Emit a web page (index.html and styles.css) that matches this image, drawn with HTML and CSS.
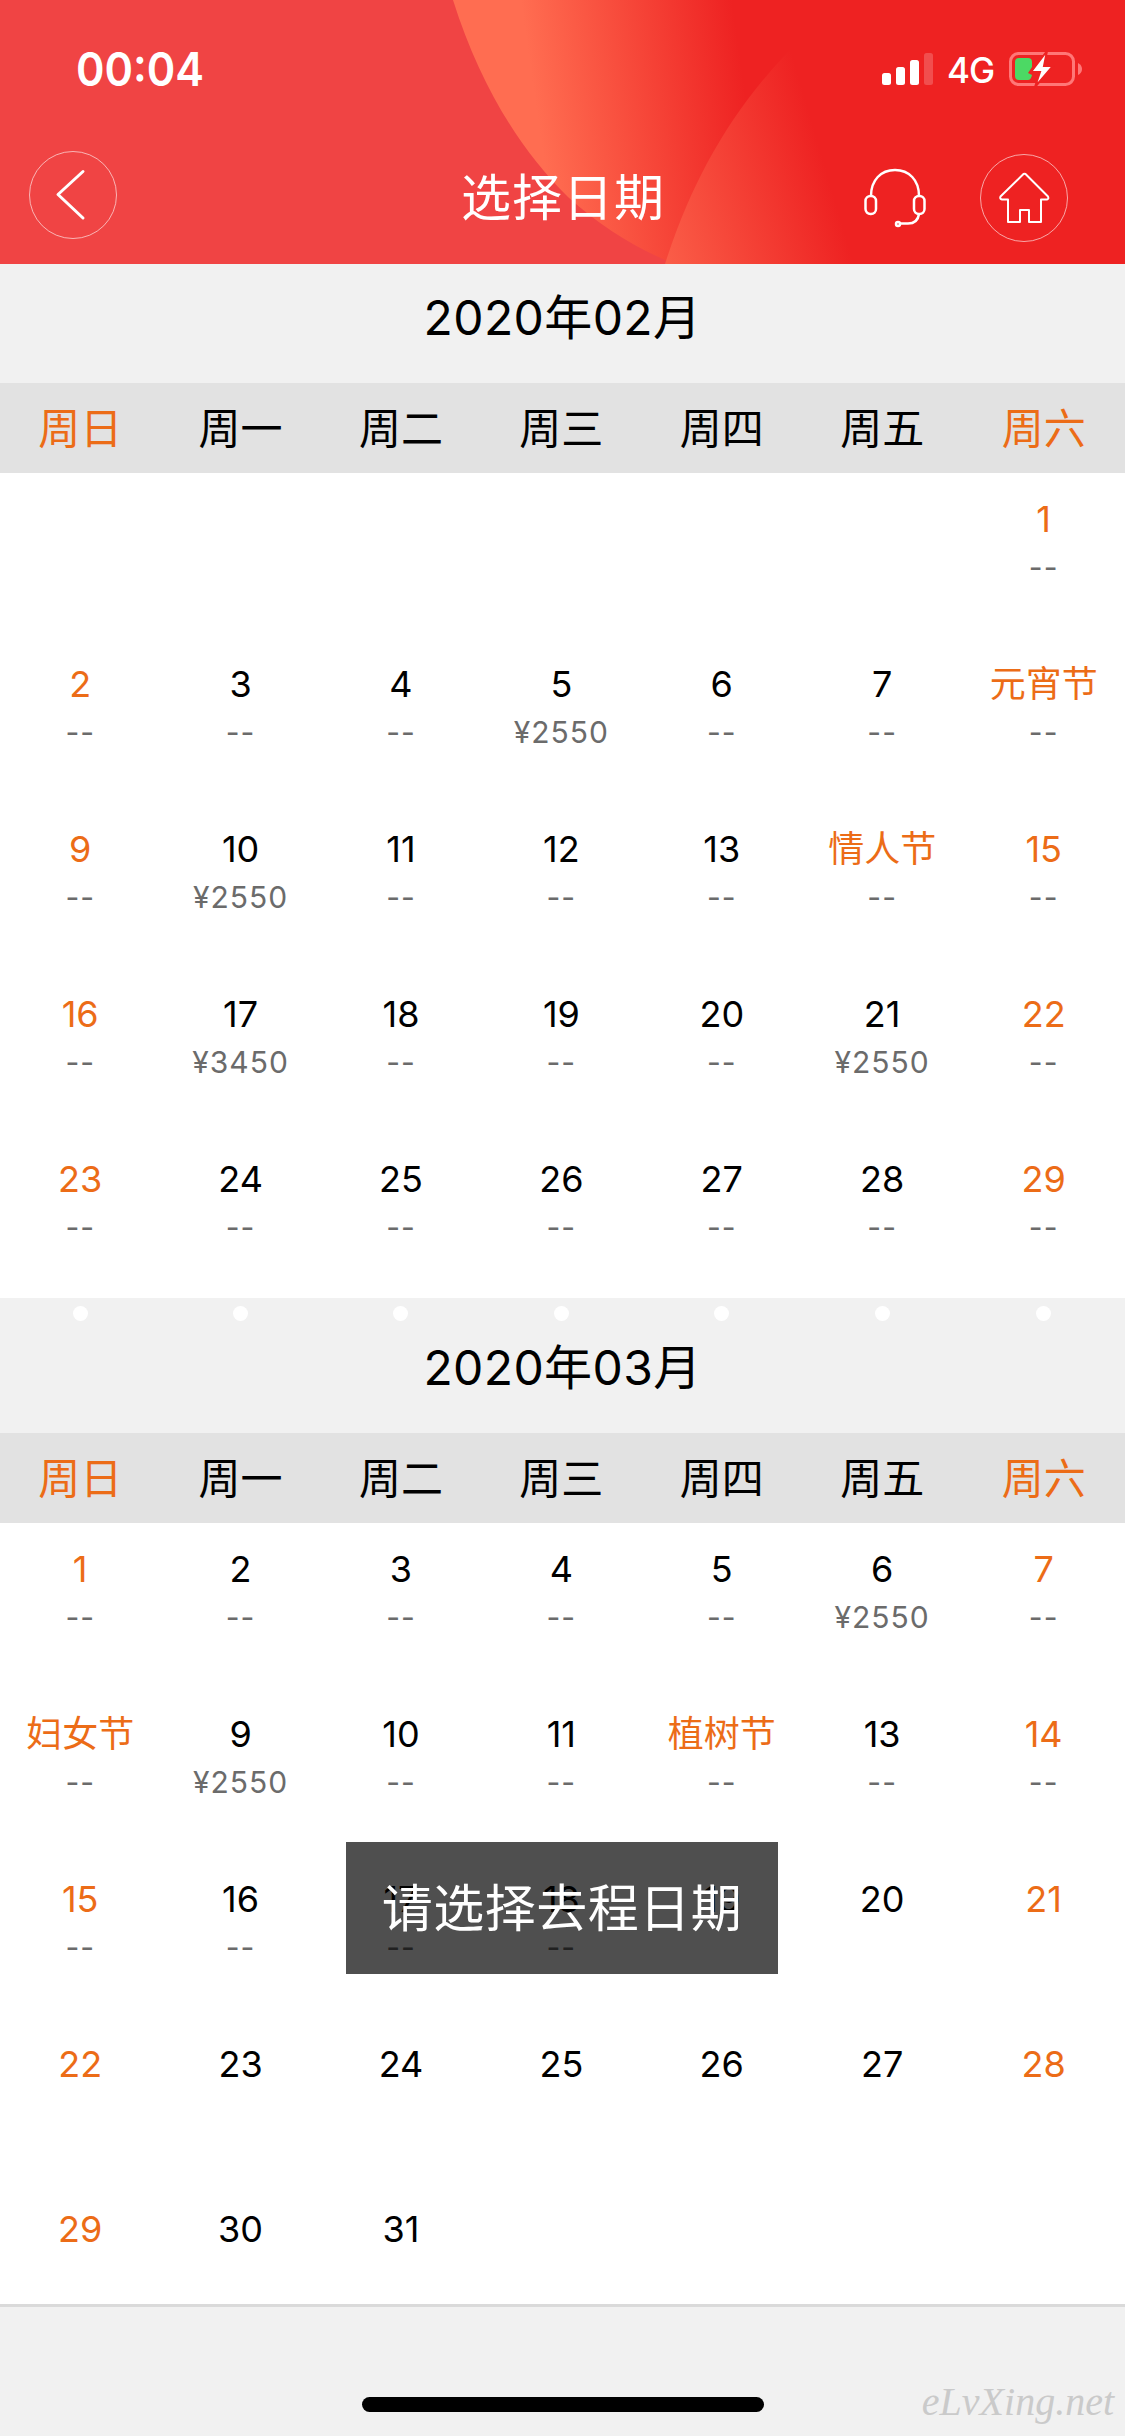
FILE: index.html
```
<!DOCTYPE html>
<html lang="zh-CN">
<head>
    <meta charset="UTF-8">
    <meta name="viewport" content="width=device-width, initial-scale=1.0">
    <title>选择日期</title>
    <link rel="stylesheet" href="styles.css">
</head>
<body>
    <header class="header">
        <svg class="header-bg" viewBox="0 0 1125 264" preserveAspectRatio="none">
            <defs>
                <linearGradient id="glow1" gradientUnits="userSpaceOnUse" x1="525" y1="30" x2="732" y2="0">
                    <stop offset="0" stop-color="#ff6d51"/>
                    <stop offset="1" stop-color="#ee2222"/>
                </linearGradient>
                <linearGradient id="glow2" gradientUnits="userSpaceOnUse" x1="655" y1="264" x2="838" y2="210">
                    <stop offset="0" stop-color="#fb614a"/>
                    <stop offset="1" stop-color="#ee2222"/>
                </linearGradient>
            </defs>
            <rect width="1125" height="264" fill="#f04444"/>
            <path d="M453 0C480 85 520 150 568 197C600 226 635 247 665 260L672 264H1125V0Z" fill="url(#glow1)"/>
            <path d="M665 264C695 170 740 95 815 25L880 0V264Z" fill="url(#glow2)"/>
        </svg>
        <div class="status">
            <span class="time">00:04</span>
            <svg class="signal" width="52" height="35" viewBox="0 0 52 35">
                <g fill="#fff">
                    <rect x="0" y="22" width="9" height="12" rx="2.5"/>
                    <rect x="14" y="16" width="9" height="18" rx="2.5"/>
                    <rect x="28" y="9" width="9" height="25" rx="2.5"/>
                    <rect x="42" y="2" width="9" height="32" rx="2.5" opacity=".2"/>
                </g>
            </svg>
            <span class="network">4G</span>
            <svg class="battery" width="74" height="38" viewBox="0 0 74 38">
                <rect x="1.5" y="4.500" width="63" height="31" rx="8" fill="none" stroke="#ff7777" stroke-width="3"/>
                <path d="M69 14Q73 16 73 20T69 26Z" fill="#f77"/>
                <path d="M10 9H19Q23 9 23 13V18L19 24L23 26Q22 31 19 31H10Q6 31 6 27V13Q6 9 10 9Z" fill="#4cd964"/>
                <path d="M38 2L22 23H31L26 38L44 17H35Z" fill="#fff" stroke="#ee2222" stroke-width="2"/>
            </svg>
        </div>
        <div class="nav">
            <svg class="back" width="90" height="90" viewBox="0 0 90 90" fill="none" stroke="#fff">
                <circle cx="45" cy="45" r="43.5" opacity=".6"/>
                <path d="M55 21.5L30 44.5L55 68" stroke-width="3" stroke-linecap="round" stroke-linejoin="round"/>
            </svg>
            <h1>选择日期</h1>
            <svg class="service" width="62" height="62" viewBox="0 0 62 62" fill="none" stroke="#fff" stroke-width="2.5">
                <path d="M7 28C7 12 17 2 31 2S55 12 55 28"/>
                <rect x="1.5" y="28" width="10.5" height="18" rx="5"/>
                <rect x="50" y="28" width="10.5" height="18" rx="5"/>
                <path d="M55 46C54 53 50 55.500 44 55.500H36"/>
                <circle cx="34" cy="56" r="2"/>
            </svg>
            <svg class="home" width="90" height="90" viewBox="0 0 90 90" fill="none" stroke="#fff">
                <circle cx="45" cy="45" r="43.5" opacity=".6"/>
                <path d="M44.5 21Q45.5 20.500 46.500 21L69 43.500Q70 46 68 46.500H62V69H50V57H41V69H29V46.500H23Q20.500 46 21.500 43.500Z" stroke-width="2" stroke-linejoin="round"/>
            </svg>
        </div>
    </header>
    <main id="calendar" class="calendar"></main>
    <footer class="footer">
        <div class="home-bar"></div>
        <span class="watermark">eLvXing.net</span>
    </footer>
    <div class="toast">请选择去程日期</div>
    <script>
        const weekNames = ['周日', '周一', '周二', '周三', '周四', '周五', '周六'];

        // first: 1号是星期几, priced: 显示到几号的价格
        const months = [
            {
                title: '2020年02月', first: 6, days: 29, priced: 29,
                holidays: { 8: '元宵节', 14: '情人节' },
                prices: { 5: 2550, 10: 2550, 17: 3450, 21: 2550 }
            },
            {
                title: '2020年03月', first: 0, days: 31, priced: 18,
                holidays: { 8: '妇女节', 12: '植树节' },
                prices: { 6: 2550, 9: 2550 }
            }
        ];

        function renderMonth(m) {
            let html = '<section class="month"><div class="dots">' + '<i></i>'.repeat(7) + '</div>';
            html += `<h2>${m.title}</h2><div class="week">`;
            html += weekNames.map((name, i) => `<span class="${i % 6 === 0 ? 'red' : ''}">${name}</span>`).join('');
            html += '</div><div class="days">';
            html += '<div class="day"></div>'.repeat(m.first);
            for (let d = 1; d <= m.days; d++) {
                const weekend = (m.first + d - 1) % 7 % 6 === 0;
                const holiday = m.holidays[d];
                const price = m.prices[d] ? '¥' + m.prices[d] : '--';
                html += `<div class="day${weekend || holiday ? ' red' : ''}">
                    <span class="date">${holiday || d}</span>
                    ${d <= m.priced ? `<span class="price">${price}</span>` : ''}
                </div>`;
            }
            return html + '</div></section>';
        }

        document.getElementById('calendar').innerHTML = months.map(renderMonth).join('');
    </script>
</body>
</html>
```
FILE: styles.css
```
* {
    box-sizing: border-box;
}

body {
    margin: 0;
    width: 1125px;
    height: 2436px;
    display: flex;
    flex-direction: column;
    overflow: hidden;
    background: #fff;
    color: #000;
    font-family: Inter, "Noto Sans CJK SC", sans-serif;
}

/* 顶部 */
.header {
    position: relative;
    height: 264px;
    flex-shrink: 0;
    color: #fff;
}

.header-bg {
    position: absolute;
    top: 0;
    left: 0;
    width: 100%;
    height: 100%;
    z-index: -1;
}

.status {
    display: flex;
    height: 132px;
    padding: 49px 42px 0 76px;
    align-items: flex-start;
}

.time {
    flex: 1;
    font-size: 47px;
    font-weight: 600;
    line-height: 40px;
    transform: scaleX(.92);
    transform-origin: left;
}

.signal {
    margin-top: 2px;
}

.network {
    width: 48px;
    margin-left: 13px;
    font-size: 35px;
    font-weight: 500;
    line-height: 43px;
    letter-spacing: -1px;
}

.battery {
    margin-left: 14px;
}

.nav {
    display: grid;
    grid-template-columns: 90px 1fr 62px 90px;
    padding: 0 56px 0 28px;
    align-items: start;
}

.nav h1 {
    margin: 28px 0 0 343px;
    font-size: 50px;
    font-weight: 400;
    line-height: 76px;
    letter-spacing: 1px;
}

.back {
    margin-top: 18px;
}

.service {
    margin: 36px 0 0 -53px;
}

.home {
    margin-top: 21px;
}

/* 日历 */
.calendar {
    flex: 1;
    min-height: 0;
    overflow: hidden;
}

.month:first-child {
    margin-top: -16px;
}

.month:first-child .dots i {
    visibility: hidden;
}

.dots,
.week,
.days {
    display: grid;
    grid-template-columns: repeat(6, 160.4px) 1fr;
}

.dots {
    justify-items: center;
    height: 23px;
    padding-top: 8px;
    background: #f1f1f1;
}

.dots i {
    width: 15px;
    height: 15px;
    border-radius: 50%;
    background: #fff;
}

.month h2 {
    margin: 0;
    height: 112px;
    padding-top: 11px;
    background: #f1f1f1;
    font-size: 48px;
    font-weight: 400;
    line-height: 72px;
    letter-spacing: .4px;
    text-align: center;
}

.week {
    height: 90px;
    background: #e2e2e2;
    font-size: 42px;
    line-height: 92px;
    text-align: center;
}

.days {
    grid-auto-rows: 165px;
}

.day {
    display: flex;
    flex-direction: column;
    align-items: center;
    padding-top: 21px;
}

.red {
    color: #ec6c17;
}

.date {
    font-size: 36px;
    line-height: 50px;
}

.price {
    color: #6b6b6b;
    font-size: 30px;
    line-height: 46px;
    letter-spacing: 1px;
}

/* 底部 */
.footer {
    position: relative;
    display: flex;
    height: 132px;
    flex-shrink: 0;
    justify-content: center;
    align-items: flex-end;
    padding-bottom: 24px;
    border-top: 3px solid #dadada;
    background: #f1f1f1;
}

.home-bar {
    width: 402px;
    height: 15px;
    border-radius: 8px;
    background: #000;
}

.watermark {
    position: absolute;
    right: 11px;
    bottom: 12px;
    color: #cacaca;
    font-family: "Liberation Serif", serif;
    font-size: 40px;
    font-style: italic;
    line-height: 44px;
}

.toast {
    position: absolute;
    top: 1842px;
    left: 346px;
    width: 432px;
    height: 132px;
    background: rgba(0, 0, 0, .69);
    color: #fff;
    font-size: 51px;
    line-height: 134px;
    letter-spacing: .5px;
    text-align: center;
    white-space: nowrap;
}
```
